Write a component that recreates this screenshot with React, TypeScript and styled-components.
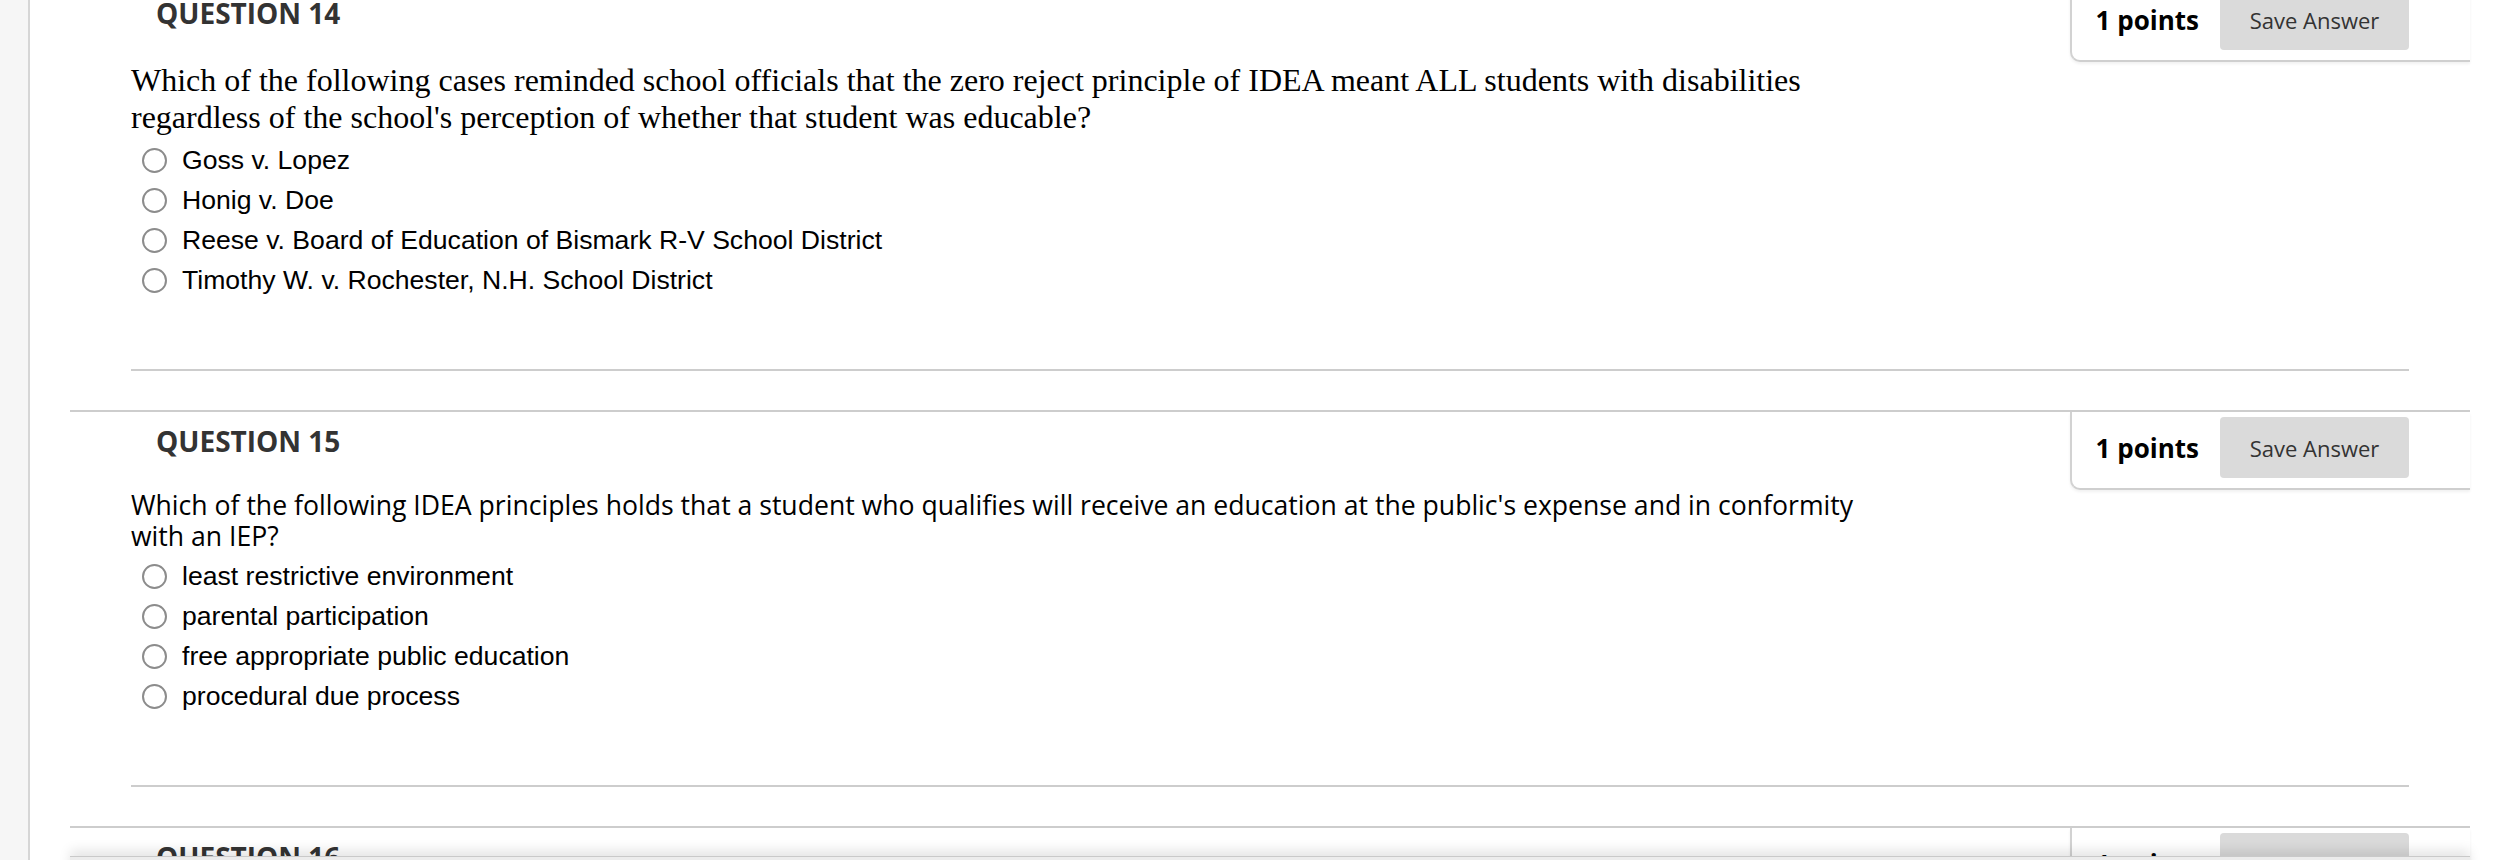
import styled, { createGlobalStyle, css } from "styled-components";

const GlobalStyle = createGlobalStyle`
  html, body {
    margin: 0;
    padding: 0;
    overflow: hidden;
    background: #fff;
  }
  body {
    font-family: "Open Sans", "Liberation Sans", sans-serif;
  }
`;

const Page = styled.div`
  display: flex;
  min-height: 100vh;
`;

const Rail = styled.div`
  width: 28px;
  flex-shrink: 0;
  background: #f6f6f6;
  border-right: 2px solid #d6d6d6;
`;

const Main = styled.main`
  flex: 1;
  min-width: 0;
  padding: 0 28px 0 40px;
`;

const QuestionList = styled.ol`
  list-style: none;
  margin: -18px 0 0;
  padding: 0;
`;

const QuestionItem = styled.li`
  border-top: 2px solid #cdcdcd;
  padding-bottom: 39px;
`;

const Header = styled.div`
  display: flex;
  justify-content: space-between;
  align-items: flex-start;
`;

const Title = styled.h3`
  margin: 0;
  padding: 10px 0 0 86px;
  font-family: "Open Sans", sans-serif;
  font-weight: 700;
  font-size: 28px;
  color: #333;
`;

const PointsBox = styled.div`
  display: flex;
  align-items: center;
  gap: 21px;
  padding: 5px 61px 10px 24px;
  background: #fff;
  border-left: 2px solid #d2d2d2;
  border-bottom: 2px solid #cfcfcf;
  border-bottom-left-radius: 10px;
  box-shadow: 0 2px 3px rgba(0, 0, 0, 0.06);
`;

const Points = styled.span`
  font-family: "Open Sans", sans-serif;
  font-weight: 700;
  font-size: 26px;
  color: #000;
  white-space: nowrap;
`;

const SaveButton = styled.button`
  width: 189px;
  height: 61px;
  padding: 0;
  border: none;
  border-radius: 4px;
  background: #dadada;
  color: #333;
  font-family: "Open Sans", sans-serif;
  font-size: 22px;
`;

const Body = styled.div`
  margin: 0 61px;
  padding-bottom: 69px;
  border-bottom: 2px solid #cdcdcd;
`;

const QuestionText = styled.div<{ $serif?: boolean }>`
  max-width: 1754px;
  color: #000;
  ${(p) =>
    p.$serif
      ? css`
          font-family: "Liberation Serif", "Times New Roman", serif;
          font-size: 32px;
          line-height: 37px;
        `
      : css`
          font-family: "Open Sans", sans-serif;
          font-size: 26.6px;
          line-height: 31px;
        `}
`;

const Options = styled.ul`
  list-style: none;
  margin: 4px 0 0;
  padding: 0 0 0 11px;
`;

const Option = styled.li`
  display: flex;
  align-items: center;
  gap: 15px;
  height: 40px;
  font-family: "Liberation Sans", Arial, sans-serif;
  font-size: 26.6px;
  line-height: 40px;
  color: #000;
`;

const Radio = styled.input.attrs({ type: "radio" })`
  appearance: none;
  margin: 0;
  width: 25px;
  height: 25px;
  flex-shrink: 0;
  border-radius: 50%;
  border: 2px solid #8c8c8c;
  background: #fff;
`;

const Footer = styled.div`
  position: fixed;
  left: 70px;
  right: 28px;
  bottom: -20px;
  height: 23px;
  background: #ececec;
  border-top: 1px solid #c9c9c9;
  box-shadow: 0 -6px 12px rgba(0, 0, 0, 0.1);
`;

type Question = {
  num: number;
  serif?: boolean;
  text?: string;
  options?: string[];
};

const questions: Question[] = [
  {
    num: 14,
    serif: true,
    text: "Which of the following cases reminded school officials that the zero reject principle of IDEA meant ALL students with disabilities regardless of the school's perception of whether that student was educable?",
    options: [
      "Goss v. Lopez",
      "Honig v. Doe",
      "Reese v. Board of Education of Bismark R-V School District",
      "Timothy W. v. Rochester, N.H. School District",
    ],
  },
  {
    num: 15,
    text: "Which of the following IDEA principles holds that a student who qualifies will receive an education at the public's expense and in conformity with an IEP?",
    options: [
      "least restrictive environment",
      "parental participation",
      "free appropriate public education",
      "procedural due process",
    ],
  },
  { num: 16 },
];

function App() {
  return (
    <>
      <GlobalStyle />
      <Page>
        <Rail />
        <Main>
          <QuestionList>
            {questions.map((q) => (
              <QuestionItem key={q.num}>
                <Header>
                  <Title>QUESTION {q.num}</Title>
                  <PointsBox>
                    <Points>1 points</Points>
                    <SaveButton>Save Answer</SaveButton>
                  </PointsBox>
                </Header>
                {q.text && (
                  <Body>
                    <QuestionText $serif={q.serif}>{q.text}</QuestionText>
                    <Options>
                      {q.options?.map((opt) => (
                        <Option key={opt}>
                          <Radio name={`q${q.num}`} />
                          <span>{opt}</span>
                        </Option>
                      ))}
                    </Options>
                  </Body>
                )}
              </QuestionItem>
            ))}
          </QuestionList>
        </Main>
      </Page>
      <Footer />
    </>
  );
}

export default App;
